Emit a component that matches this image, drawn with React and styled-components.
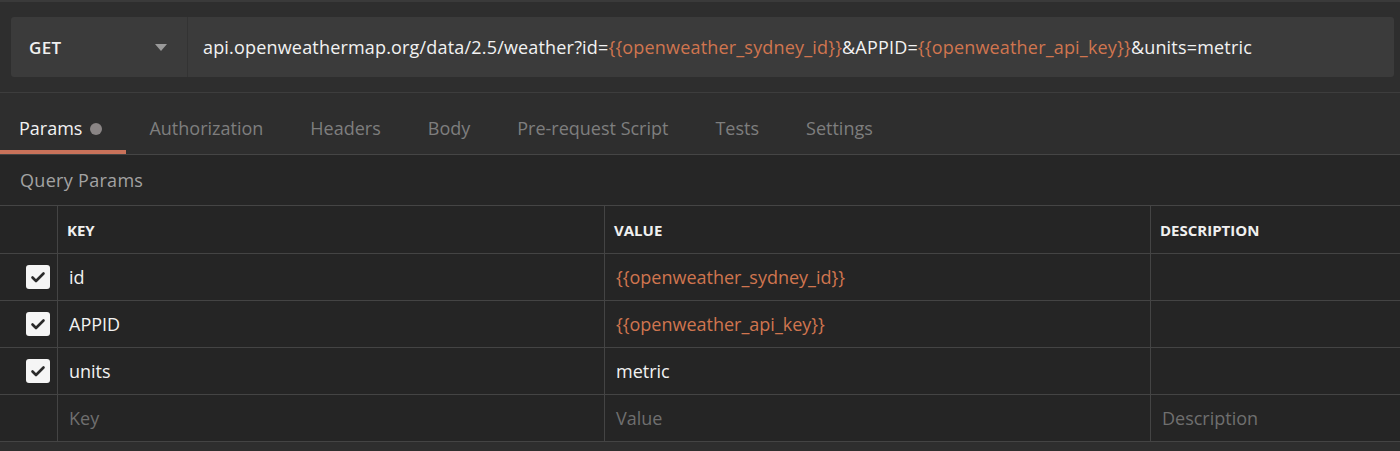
import React from "react"
import styled, { createGlobalStyle } from "styled-components"

const GlobalStyle = createGlobalStyle`
  html, body {
    margin: 0;
    padding: 0;
    background: #2c2c2c;
  }
  body {
    font-family: "Open Sans", "Noto Sans", sans-serif;
    -webkit-font-smoothing: antialiased;
  }
`

const Page = styled.div`
  width: 1400px;
  height: 451px;
  overflow: hidden;
  background: #2e2e2e;
  border-top: 2px solid #3a3a3a;
  box-sizing: border-box;
`

const RequestBar = styled.div`
  display: flex;
  align-items: center;
  padding: 15px 6px 15px 11px;
  border-bottom: 1px solid #3d3d3d;
`

const UrlBox = styled.div`
  flex: 1;
  display: flex;
  height: 60px;
  background: #3b3b3b;
  border-radius: 3px;
`

const Method = styled.div`
  width: 177px;
  box-sizing: border-box;
  display: flex;
  align-items: center;
  justify-content: space-between;
  padding: 0 20px 0 18px;
  border-right: 1px solid #333;
  color: #f0f0f0;
  font-size: 17px;
  font-weight: 600;
  letter-spacing: 0.3px;
`

const Caret = styled.span`
  width: 0;
  height: 0;
  border-left: 6px solid transparent;
  border-right: 6px solid transparent;
  border-top: 7px solid #9a9a9a;
`

const Url = styled.div`
  display: flex;
  align-items: center;
  padding-left: 15px;
  color: #f2f2f2;
  font-size: 18px;
  letter-spacing: 0.18px;
  white-space: nowrap;
`

const Var = styled.span`
  color: #d0754f;
`

const Tabs = styled.div`
  display: flex;
  height: 61px;
  border-bottom: 1px solid #454545;
  box-sizing: content-box;
`

const Tab = styled.div`
  display: flex;
  align-items: center;
  gap: 8px;
  padding: 8px 24px 0 ${p => (p.first ? "19px" : "23px")};
  font-size: 18px;
  color: ${p => (p.active ? "#f2f2f2" : "#7e7e7e")};
  box-shadow: ${p => (p.active ? "inset 0 -4px 0 #c9725a" : "none")};
`

const Dot = styled.span`
  width: 12px;
  height: 12px;
  border-radius: 50%;
  background: #8a8585;
  margin-top: 2px;
`

const Section = styled.div`
  background: #262626;
`

const SectionTitle = styled.div`
  height: 50px;
  display: flex;
  align-items: center;
  padding-left: 20px;
  font-size: 18px;
  letter-spacing: 0.3px;
  color: #a3a3a3;
  border-bottom: 1px solid #454545;
`

const Table = styled.div`
  display: grid;
  grid-template-columns: 57px 547px 546px 1fr;
`

const Cell = styled.div`
  height: ${p => (p.head ? "47px" : "46px")};
  display: flex;
  align-items: center;
  padding-left: ${p => (p.head ? "9px" : "11px")};
  border-bottom: 1px solid #444;
  border-left: ${p => (p.first ? "none" : "1px solid #444")};
  font-size: ${p => (p.head ? "15px" : "18px")};
  font-weight: ${p => (p.head ? 700 : 400)};
  color: ${p =>
    p.head ? "#f0f0f0" : p.muted ? "#6f6f6f" : p.accent ? "#d0754f" : "#f2f2f2"};
  background: #252525;
`

const CheckCell = styled(Cell)`
  padding-left: 26px;
`

const Check = styled.span`
  width: 24px;
  height: 24px;
  border-radius: 3px;
  background: #f5f5f5;
  display: flex;
  align-items: center;
  justify-content: center;
`

const CheckIcon = () => (
  <svg width="16" height="16" viewBox="0 0 16 16">
    <path
      d="M2.5 8.5 L6 12 L13.5 4.5"
      fill="none"
      stroke="#2a2a2a"
      strokeWidth="2.6"
      strokeLinecap="round"
      strokeLinejoin="round"
    />
  </svg>
)

const params = [
  { key: "id", value: "{{openweather_sydney_id}}", variable: true },
  { key: "APPID", value: "{{openweather_api_key}}", variable: true },
  { key: "units", value: "metric" },
]

const tabs = [
  "Authorization",
  "Headers",
  "Body",
  "Pre-request Script",
  "Tests",
  "Settings",
]

const App = () => (
  <Page>
    <GlobalStyle />
    <RequestBar>
      <UrlBox>
        <Method>
          GET
          <Caret />
        </Method>
        <Url>
          api.openweathermap.org/data/2.5/weather?id=
          <Var>{"{{openweather_sydney_id}}"}</Var>
          &amp;APPID=
          <Var>{"{{openweather_api_key}}"}</Var>
          &amp;units=metric
        </Url>
      </UrlBox>
    </RequestBar>
    <Tabs>
      <Tab first active>
        Params <Dot />
      </Tab>
      {tabs.map(t => (
        <Tab key={t}>{t}</Tab>
      ))}
    </Tabs>
    <Section>
      <SectionTitle>Query Params</SectionTitle>
      <Table>
        <Cell head first />
        <Cell head>KEY</Cell>
        <Cell head>VALUE</Cell>
        <Cell head>DESCRIPTION</Cell>
        {params.map(p => (
          <React.Fragment key={p.key}>
            <CheckCell first>
              <Check>
                <CheckIcon />
              </Check>
            </CheckCell>
            <Cell>{p.key}</Cell>
            <Cell accent={p.variable}>{p.value}</Cell>
            <Cell />
          </React.Fragment>
        ))}
        <Cell first />
        <Cell muted>Key</Cell>
        <Cell muted>Value</Cell>
        <Cell muted>Description</Cell>
      </Table>
    </Section>
  </Page>
)

export default App
